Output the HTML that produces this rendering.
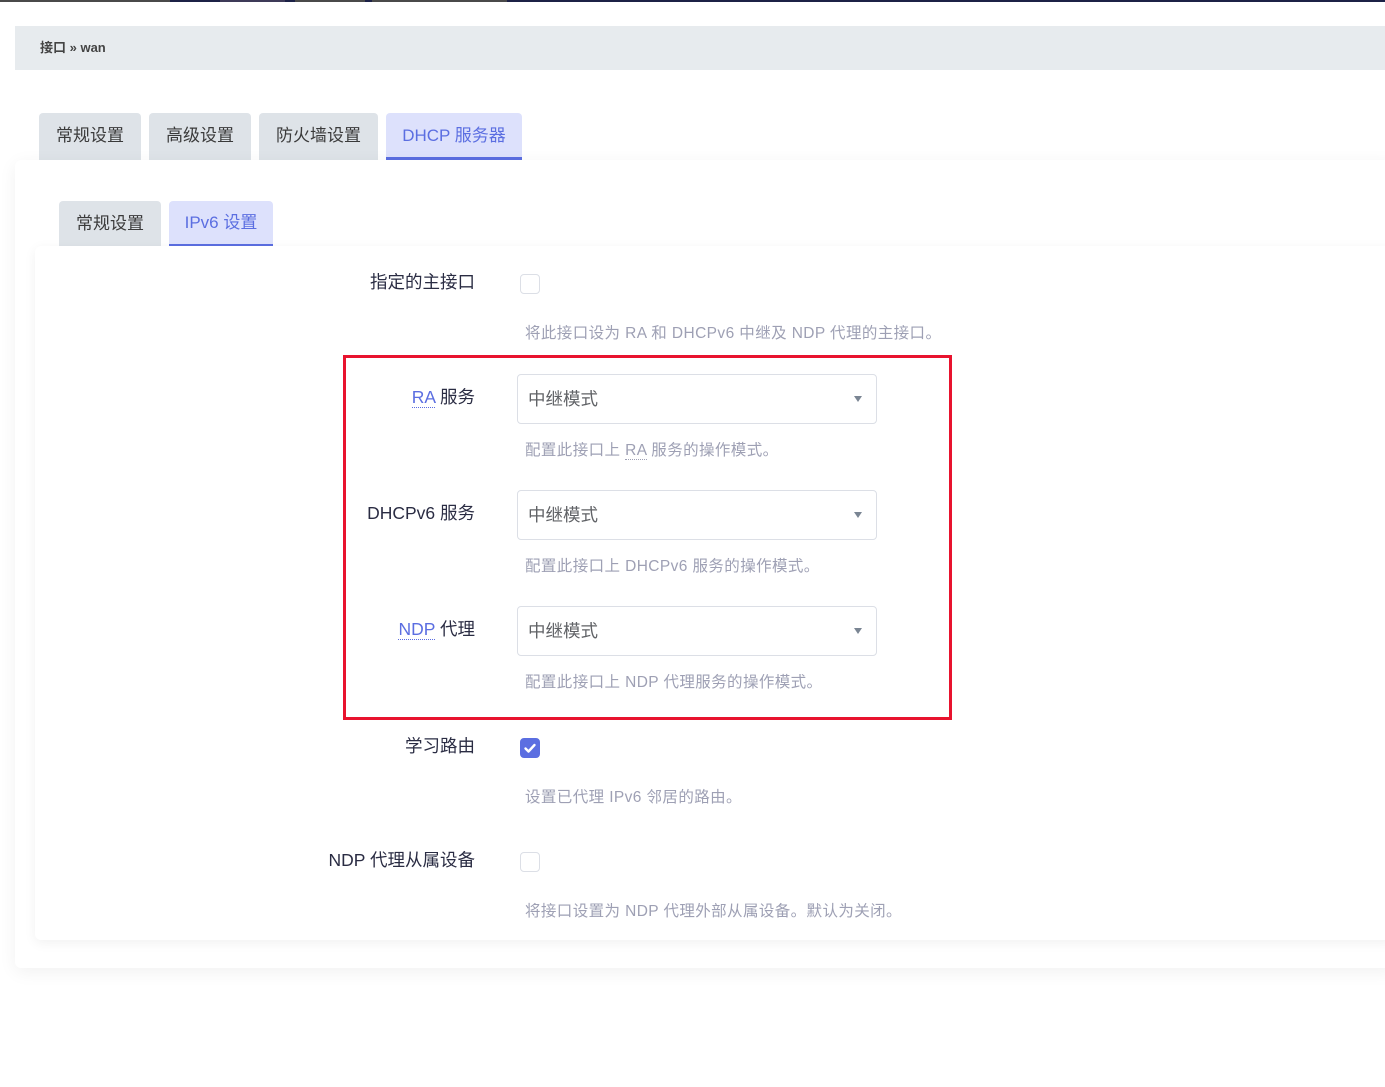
<!DOCTYPE html>
<html><head><meta charset="utf-8"><style>
*{margin:0;padding:0;box-sizing:border-box}
body{width:1385px;height:1087px;background:#fff;position:relative;overflow:hidden;font-family:"Liberation Sans","Noto Sans CJK SC",sans-serif;color:#2a2c43}
.a{position:absolute}
.tab{position:absolute;height:47px;background:#dee3e8;border-radius:4px 4px 0 0;font-size:17px;color:#3a3a3a;text-align:center;line-height:46px}
.tab.on{background:#dde1fc;color:#5b6ee1;border-bottom:3px solid #5b6ee1;line-height:46px}
.lbl{position:absolute;right:910px;font-size:17.5px;color:#2a2c43;white-space:nowrap}
.desc{position:absolute;left:525px;font-size:15.5px;letter-spacing:0.4px;color:#9ea0b4;white-space:nowrap}
.cb{position:absolute;left:520px;width:20px;height:20px;border:1px solid #dcdfe6;border-radius:4px;background:#fff}
.sel{position:absolute;left:517px;width:360px;height:50px;border:1px solid #dcdfe6;border-radius:4px;background:#fff;font-size:17.5px;color:#606266;line-height:48px;padding-left:10px}
.sel:after{content:"";position:absolute;right:14px;top:21px;border-left:4px solid transparent;border-right:4px solid transparent;border-top:6px solid #7a8593}
.ab{border-bottom:1.5px dotted #5b6ee1;color:#5b6ee1}
</style></head><body>
<div class="a" style="left:0;top:0;width:170px;height:2px;background:#4a4a4a"></div>
<div class="a" style="left:170px;top:0;width:1215px;height:2px;background:#1c2146"></div>
<div class="a" style="left:220px;top:0;width:65px;height:2px;background:#3d3a58"></div>
<div class="a" style="left:295px;top:0;width:70px;height:2px;background:#4a4a4a"></div>
<div class="a" style="left:372px;top:0;width:135px;height:2px;background:#4a4a4a"></div>

<div class="a" style="left:15px;top:26px;width:1370px;height:44px;background:#e7ebee;font-size:13px;font-weight:bold;color:#444;line-height:44px;padding-left:25px">接口 » wan</div>

<div class="tab" style="left:39px;top:113px;width:102px">常规设置</div>
<div class="tab" style="left:149px;top:113px;width:102px">高级设置</div>
<div class="tab" style="left:259px;top:113px;width:119px">防火墙设置</div>
<div class="tab on" style="left:386px;top:113px;width:136px">DHCP 服务器</div>

<div class="a" style="left:15px;top:160px;width:1380px;height:808px;background:#fff;border-radius:6px;box-shadow:0 4px 18px rgba(0,0,0,0.06)"></div>

<div class="tab" style="left:59px;top:201px;width:102px;height:46px">常规设置</div>
<div class="tab on" style="left:169px;top:201px;width:104px;height:46px;line-height:43px">IPv6 设置</div>

<div class="a" style="left:35px;top:246px;width:1360px;height:694px;background:#fff;border-radius:6px;box-shadow:0 3px 12px rgba(0,0,0,0.06)"></div>

<div class="lbl" style="top:269px">指定的主接口</div>
<div class="cb" style="top:274px"></div>
<div class="desc" style="top:321px">将此接口设为 RA 和 DHCPv6 中继及 NDP 代理的主接口。</div>

<div class="a" style="left:343px;top:355px;width:609px;height:365px;border:3px solid #e8132e"></div>

<div class="lbl" style="top:384px"><span class="ab">RA</span> 服务</div>
<div class="sel" style="top:374px">中继模式</div>
<div class="desc" style="top:438px">配置此接口上 <span style="border-bottom:1px dotted #9ea0b4">RA</span> 服务的操作模式。</div>

<div class="lbl" style="top:500px">DHCPv6 服务</div>
<div class="sel" style="top:490px">中继模式</div>
<div class="desc" style="top:554px">配置此接口上 DHCPv6 服务的操作模式。</div>

<div class="lbl" style="top:616px"><span class="ab">NDP</span> 代理</div>
<div class="sel" style="top:606px">中继模式</div>
<div class="desc" style="top:670px">配置此接口上 NDP 代理服务的操作模式。</div>

<div class="lbl" style="top:733px">学习路由</div>
<div class="cb" style="top:738px;background:#5b6ee1;border-color:#5b6ee1"><svg width="18" height="18" viewBox="0 0 18 18" style="position:absolute;left:0;top:0"><path d="M4.5 9.5l3 3 6-6.5" stroke="#fff" stroke-width="2.4" fill="none" stroke-linecap="round" stroke-linejoin="round"/></svg></div>
<div class="desc" style="top:785px">设置已代理 IPv6 邻居的路由。</div>

<div class="lbl" style="top:847px">NDP 代理从属设备</div>
<div class="cb" style="top:852px"></div>
<div class="desc" style="top:899px">将接口设置为 NDP 代理外部从属设备。默认为关闭。</div>
</body></html>
